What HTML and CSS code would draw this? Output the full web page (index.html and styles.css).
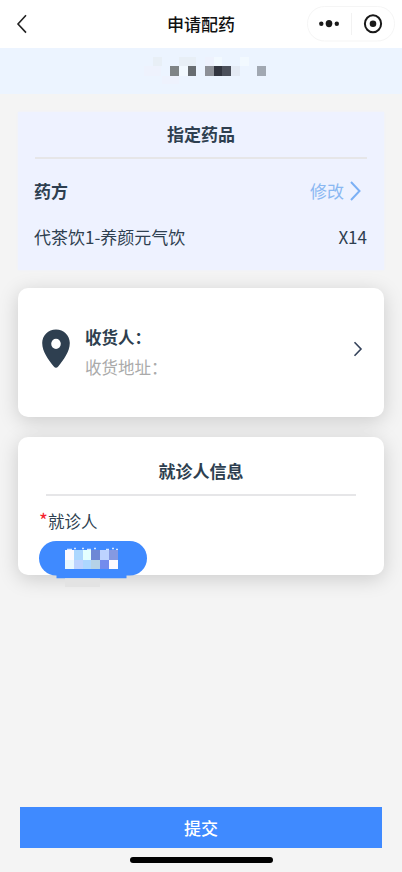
FILE: index.html
```html
<!DOCTYPE html>
<html lang="zh-CN">
<head>
<meta charset="utf-8">
<title>申请配药</title>
<link rel="stylesheet" href="styles.css">
</head>
<body>
<div class="page">
  <header class="nav">
    <svg class="back" width="12" height="20" viewBox="0 0 12 20"><path d="M10 1.2 2 10l8 8.6"/></svg>
    <h1 class="nav-title">申请配药</h1>
    <div class="capsule">
      <svg width="88" height="36" viewBox="0 0 88 36">
        <rect class="frame" x=".5" y=".5" width="87" height="34.5" rx="17"/>
        <path class="split" d="M44.5 7v22"/>
        <circle cx="14.3" cy="17.8" r="2.2"/><ellipse cx="22" cy="17.6" rx="3.3" ry="3.7"/><circle cx="29.8" cy="17.8" r="2.2"/>
        <ellipse class="ring" cx="66" cy="17.8" rx="8.1" ry="8.5"/><circle cx="66" cy="17.7" r="3.3"/>
      </svg>
    </div>
  </header>
  <div class="banner">
    <svg width="120" height="38" viewBox="0 0 120 38" shape-rendering="crispEdges">
      <g fill="#e8eff6"><rect x="13" y="9" width="9" height="9"/><rect x="39" y="9" width="17" height="9"/></g>
      <g fill="#eef2fd"><rect x="4" y="18" width="17" height="10"/><rect x="65" y="9" width="9" height="9"/><rect x="22" y="28" width="17" height="8"/></g>
      <g fill="#f2f9ff"><rect x="39" y="18" width="9" height="10"/><rect x="74" y="9" width="8" height="9"/><rect x="100" y="9" width="9" height="9"/></g>
      <rect x="30" y="18" width="9" height="10" fill="#7f8486"/>
      <rect x="48" y="18" width="8" height="10" fill="#686d71"/>
      <rect x="65" y="18" width="9" height="10" fill="#8d9097"/>
      <rect x="74" y="18" width="8" height="10" fill="#32353f"/>
      <rect x="82" y="18" width="9" height="10" fill="#4c505b"/>
      <rect x="91" y="18" width="9" height="10" fill="#e4eaf4"/>
      <rect x="117" y="18" width="3" height="10" fill="#a1a8b2"/>
    </svg>
    <span class="cell"></span>
  </div>
  <main class="content">
    <section class="medicine">
      <h2 class="section-title">指定药品</h2>
      <div class="row row-head">
        <strong>药方</strong>
        <span class="edit">修改<svg width="13" height="20" viewBox="0 0 13 20"><path d="m2 1 8.5 9L2 19"/></svg></span>
      </div>
      <div class="row row-item"><span>代茶饮1-养颜元气饮</span><span>X14</span></div>
    </section>
    <section class="card address">
      <svg class="pin" width="28" height="40" viewBox="0 0 28 40"><path fill-rule="evenodd" d="M14 .4C6.2.4.2 6.4.2 14.1.2 22.8 6.6 31 11.8 37.5c1.5 1.8 2.9 1.8 4.4 0C21.4 31 27.8 22.8 27.8 14.1 27.8 6.4 21.8.4 14 .4Zm0 9.3a4.8 5.1 0 1 1 0 10.2 4.8 5.1 0 0 1 0-10.2Z"/></svg>
      <div class="receiver"><strong>收货人：</strong><span>收货地址：</span></div>
      <svg class="arrow" width="10" height="16" viewBox="0 0 10 16"><path d="m1.5 1.3 6.5 6.7-6.5 6.7"/></svg>
    </section>
    <section class="card patient">
      <h2 class="section-title">就诊人信息</h2>
      <div class="label"><i>*</i>就诊人</div>
      <div class="chip">
        <svg width="108" height="48" viewBox="0 0 108 48">
          <rect class="blue" width="108" height="34.5" rx="17.2"/>
          <path class="blue" d="M17.5 30h70v7.3h-70z"/>
          <path class="faint" d="M26 37.3h35V46H26z"/>
          <path class="marks" d="M28 8.5h5m2-1h2m6 0h2m3 1h4m3-1h2m10 1h3m3-1h2m2 1h2"/>
          <g shape-rendering="crispEdges">
            <path fill="#fdfaff" d="M26 9h9v10h-9zM70 19h9v9h-9z"/><path fill="#add7ff" d="M35 9h9v10h-9zM44 19h9v9h-9z"/>
            <path fill="#e4ffff" d="M44 9h8v10h-8z"/><path fill="#6e88d5" d="M52 9h9v10h-9z"/>
            <path fill="#bdd3ff" d="M61 9h9v10h-9zM35 19h9v9h-9z"/><path fill="#8599e1" d="M70 9h9v10h-9z"/>
            <path fill="#e9f8ff" d="M26 19h9v9h-9z"/><path fill="#b5d2e7" d="M52 19h9v9h-9z"/><path fill="#738bed" d="M61 19h9v9h-9z"/>
          </g>
        </svg>
      </div>
    </section>
  </main>
  <footer class="footer">
    <button class="submit" type="button">提交</button>
    <div class="home-bar"></div>
  </footer>
</div>
</body>
</html>
```
FILE: styles.css
```css
* { box-sizing: border-box; }
body {
  margin: 0;
  background: #f4f4f4;
  color: #2e3f50;
  font: 17px/24px "Noto Sans CJK SC", sans-serif;
}
h1, h2 { margin: 0; font-size: 17px; line-height: 24px; }
svg { display: block; flex: none; }
.page { height: 872px; display: flex; flex-direction: column; overflow: hidden; }
.nav {
  height: 48px;
  flex: none;
  background: #fff;
  display: grid;
  grid-template-columns: 96px 1fr 96px;
  align-items: center;
  padding-bottom: 1px;
}
.back { margin-left: 16px; fill: none; stroke: #222; stroke-width: 1.6; }
.nav-title { color: #111; text-align: center; font-weight: 500; padding-top: 1px; }
.capsule { fill: #191919; margin-left: 1px; }
.frame { fill: #fff; stroke: #f5f5f5; }
.split { stroke: #f2f2f2; }
.ring { fill: none; stroke: #191919; stroke-width: 2; }
.banner { height: 46px; flex: none; background: #ecf4ff; padding: 0 0 0 140px; display: flex; }
.cell { width: 6px; height: 10px; margin-top: 18px; background: #a1a8b2; }
.content { flex: 1; padding: 18px 18px 0; }
.medicine { height: 158px; background: #eef2ff; padding: 10px 17px 0 16px; box-shadow: 0 0 2px #eef2ff; }
.section-title { text-align: center; font-weight: 700; border-bottom: 2px solid #e6e6e8; }
.medicine .section-title { height: 37px; margin-left: 1px; }
.row { display: flex; justify-content: space-between; }
.row-head { margin-top: 20px; }
.row-item { margin-top: 22px; }
strong { font-weight: 700; }
.edit { color: #8ab8f2; display: flex; align-items: center; gap: 5px; margin-right: 5px; }
.edit path { fill: none; stroke: #7bb0f5; stroke-width: 2; }
.card { background: #fff; border-radius: 10px; box-shadow: 0 4px 20px rgba(0, 0, 0, .17); }
.address { height: 129px; margin-top: 18px; padding: 0 21px 0 24px; display: flex; align-items: center; }
.pin { fill: #2e3f50; margin-bottom: 8px; }
.receiver { flex: 1; margin: 0 0 2px 15px; display: flex; flex-direction: column; gap: 6px; font-size: 16.5px; }
.receiver span { color: #aaa; }
.arrow { fill: none; stroke: #34425a; stroke-width: 1.6; margin-bottom: 8px; }
.patient { height: 138px; margin-top: 20px; padding: 22px 21px 0; }
.patient .section-title { height: 37px; margin: 0 7px; }
.label { margin-top: 13px; font-size: 16.5px; }
.label i { font-style: normal; color: #f5222d; font-size: 19px; line-height: 20px; }
.chip { margin-top: 8px; }
.blue { fill: #3f8aff; }
.faint { fill: #e3e3e3; }
.marks { stroke: #d6e6ff; stroke-width: 1.5; }
.footer { height: 65px; flex: none; padding: 0 20px; }
.submit {
  width: 100%;
  height: 41px;
  display: block;
  border: 0;
  padding: 0;
  background: #3f8aff;
  color: #fff;
  font: 500 17px/40px "Noto Sans CJK SC", sans-serif;
}
.home-bar { width: 143px; height: 6px; margin: 9px auto 0; border-radius: 3px; background: #000; }
```
